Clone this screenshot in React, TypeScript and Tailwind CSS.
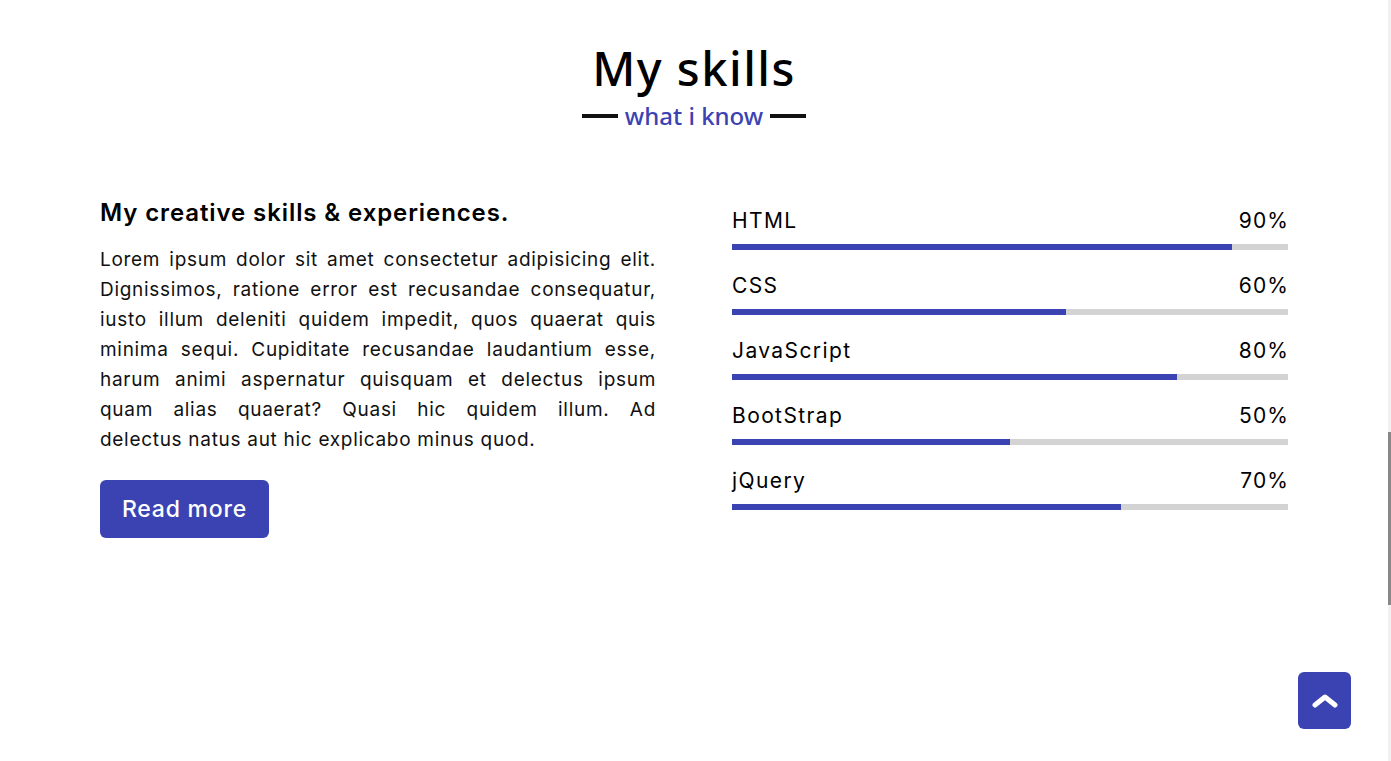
const skills = [
  { name: 'HTML', value: 90 },
  { name: 'CSS', value: 60 },
  { name: 'JavaScript', value: 80 },
  { name: 'BootStrap', value: 50 },
  { name: 'jQuery', value: 70 },
];

// line breaks follow the reference paragraph
const aboutLines = [
  'Lorem ipsum dolor sit amet consectetur adipisicing elit.',
  'Dignissimos, ratione error est recusandae consequatur,',
  'iusto illum deleniti quidem impedit, quos quaerat quis',
  'minima sequi. Cupiditate recusandae laudantium esse,',
  'harum animi aspernatur quisquam et delectus ipsum',
  'quam alias quaerat? Quasi hic quidem illum. Ad',
  'delectus natus aut hic explicabo minus quod.',
];

function SkillBar({ name, value }: { name: string; value: number }) {
  return (
    <div className="pb-[21px]">
      <div className="flex justify-between text-[21px] leading-[30px] tracking-[1.4px] text-black">
        <span>{name}</span>
        <span className="-mr-[1.2px] tracking-[1.2px]">{value}%</span>
      </div>
      <div className="mt-[8px] h-[6px] w-full bg-[#d3d3d3]">
        <div className="h-full bg-[#3b43b2]" style={{ width: `${value}%` }} />
      </div>
    </div>
  );
}

export default function App() {
  return (
    <div className="min-h-screen bg-white pr-[3px] font-['Inter',sans-serif]">
      <section className="pt-[40px]">
        <div className="text-center">
          <h2 className="font-['Noto_Sans',sans-serif] text-[47px] font-medium leading-[56px] tracking-[1.5px] text-black">
            My skills
          </h2>
          <div className="mt-[5px] flex items-center justify-center gap-[7px]">
            <span className="h-[4px] w-[36px] bg-[#111]" />
            <span className="font-['Noto_Sans',sans-serif] text-[24px] font-medium leading-[30px] text-[#3b43b2]">
              what i know
            </span>
            <span className="h-[4px] w-[36px] bg-[#111]" />
          </div>
        </div>

        <div className="mx-auto mt-[66px] grid max-w-[1188px] grid-cols-2 gap-[76px]">
          <div>
            <h3 className="text-[24px] font-semibold leading-[32px] tracking-[0.9px] text-black">
              My creative skills &amp; experiences.
            </h3>
            <p className="mt-[16px] text-[19px] leading-[30px] tracking-[0.7px] text-[#111]">
              {aboutLines.map((line, i) => (
                <span
                  key={i}
                  className={
                    i < aboutLines.length - 1
                      ? 'block whitespace-nowrap text-justify [text-align-last:justify]'
                      : 'block whitespace-nowrap'
                  }
                >
                  {line}
                </span>
              ))}
            </p>
            <button className="mt-[25px] flex h-[58px] w-[169px] items-center justify-center rounded-[6px] bg-[#3b43b2] text-[23px] font-medium tracking-[0.8px] text-white">
              Read more
            </button>
          </div>

          <div className="pt-[9px]">
            {skills.map((s) => (
              <SkillBar key={s.name} name={s.name} value={s.value} />
            ))}
          </div>
        </div>
      </section>

      <button
        aria-label="Back to top"
        className="fixed bottom-[32px] right-[40px] flex h-[57px] w-[53px] items-center justify-center rounded-[6px] bg-[#3b43b2]"
      >
        <svg width="26" height="14" viewBox="0 0 26 14" fill="none" aria-hidden="true">
          <polyline
            points="3,11 13,3 23,11"
            stroke="white"
            strokeWidth="5"
            strokeLinecap="round"
            strokeLinejoin="round"
          />
        </svg>
      </button>

      <div className="fixed right-0 top-0 h-full w-[3px] bg-[#f1f1f1]">
        <div className="absolute left-0 top-[432px] h-[173px] w-full bg-[#888]" />
      </div>
    </div>
  );
}
